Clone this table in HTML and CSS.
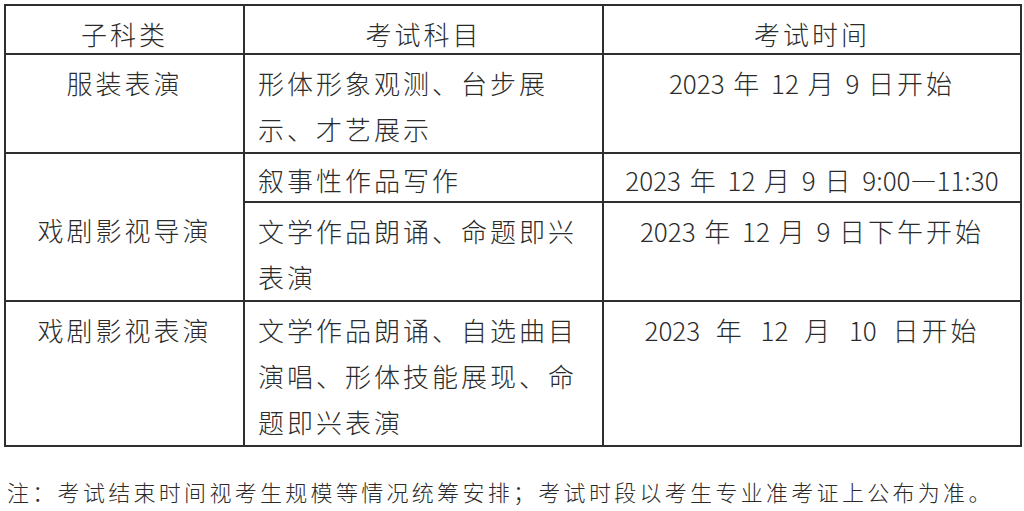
FILE: index.html
```html
<!DOCTYPE html>
<html lang="zh-CN">
<head>
<meta charset="utf-8">
<title>考试时间安排</title>
<link rel="stylesheet" href="styles.css">
</head>
<body>
<table class="exam">
  <colgroup>
    <col class="c1">
    <col class="c2">
    <col class="c3">
  </colgroup>
  <thead>
    <tr class="head">
      <th>子科类</th>
      <th>考试科目</th>
      <th>考试时间</th>
    </tr>
  </thead>
  <tbody>
    <tr>
      <td class="cat">服装表演</td>
      <td class="subj">形体形象观测、台步展示、才艺展示</td>
      <td class="time"><span class="n">2023</span> 年 <span class="n">12</span> 月 <span class="n">9</span> 日开始</td>
    </tr>
    <tr class="short">
      <td class="cat mid" rowspan="2">戏剧影视导演</td>
      <td class="subj">叙事性作品写作</td>
      <td class="time"><span class="n">2023</span> 年 <span class="n">12</span> 月 <span class="n">9</span> 日 <span class="n">9:00—11:30</span></td>
    </tr>
    <tr>
      <td class="subj">文学作品朗诵、命题即兴表演</td>
      <td class="time"><span class="n">2023</span> 年 <span class="n">12</span> 月 <span class="n">9</span> 日下午开始</td>
    </tr>
    <tr>
      <td class="cat">戏剧影视表演</td>
      <td class="subj">文学作品朗诵、自选曲目演唱、形体技能展现、命题即兴表演</td>
      <td class="time wide"><span class="n">2023</span> 年 <span class="n">12</span> 月 <span class="n">10</span> 日开始</td>
    </tr>
  </tbody>
</table>
<p class="note">注：考试结束时间视考生规模等情况统筹安排；考试时段以考生专业准考证上公布为准。</p>
</body>
</html>
```

FILE: styles.css
```css
html, body {
  margin: 0;
  padding: 0;
  background: #ffffff;
}

body {
  font-family: "Noto Sans CJK SC", "Noto Sans", sans-serif;
  font-weight: 300;
  color: #2b2b2b;
}

.exam {
  border-collapse: collapse;
  table-layout: fixed;
  width: 1016px;
  margin: 4px 0 0 4px;
  font-size: 26px;
  letter-spacing: 3px;
}

.c1 { width: 239px; }
.c2 { width: 359px; }
.c3 { width: 418px; }

.exam th,
.exam td {
  border: 2px solid #2e2e2e;
  padding: 5px 0 0;
  line-height: 46px;
  vertical-align: top;
  font-weight: 300;
}

.exam .head th {
  padding-top: 9px;
  line-height: 38px;
  text-align: center;
}

.exam .short td {
  line-height: 42px;
}

.exam .short td.cat {
  line-height: 46px;
}

.cat {
  text-align: center;
}

.cat.mid {
  vertical-align: middle;
}

.subj {
  text-align: left;
  padding-left: 13px !important;
  padding-right: 20px !important;
}

.time {
  text-align: center;
  white-space: nowrap;
}

.time .n {
  letter-spacing: 0;
}

.time.wide {
  word-spacing: 7px;
}

.note {
  margin: 30px 0 0 7px;
  font-size: 22px;
  line-height: 28px;
  letter-spacing: 3.3px;
  white-space: nowrap;
}
```
